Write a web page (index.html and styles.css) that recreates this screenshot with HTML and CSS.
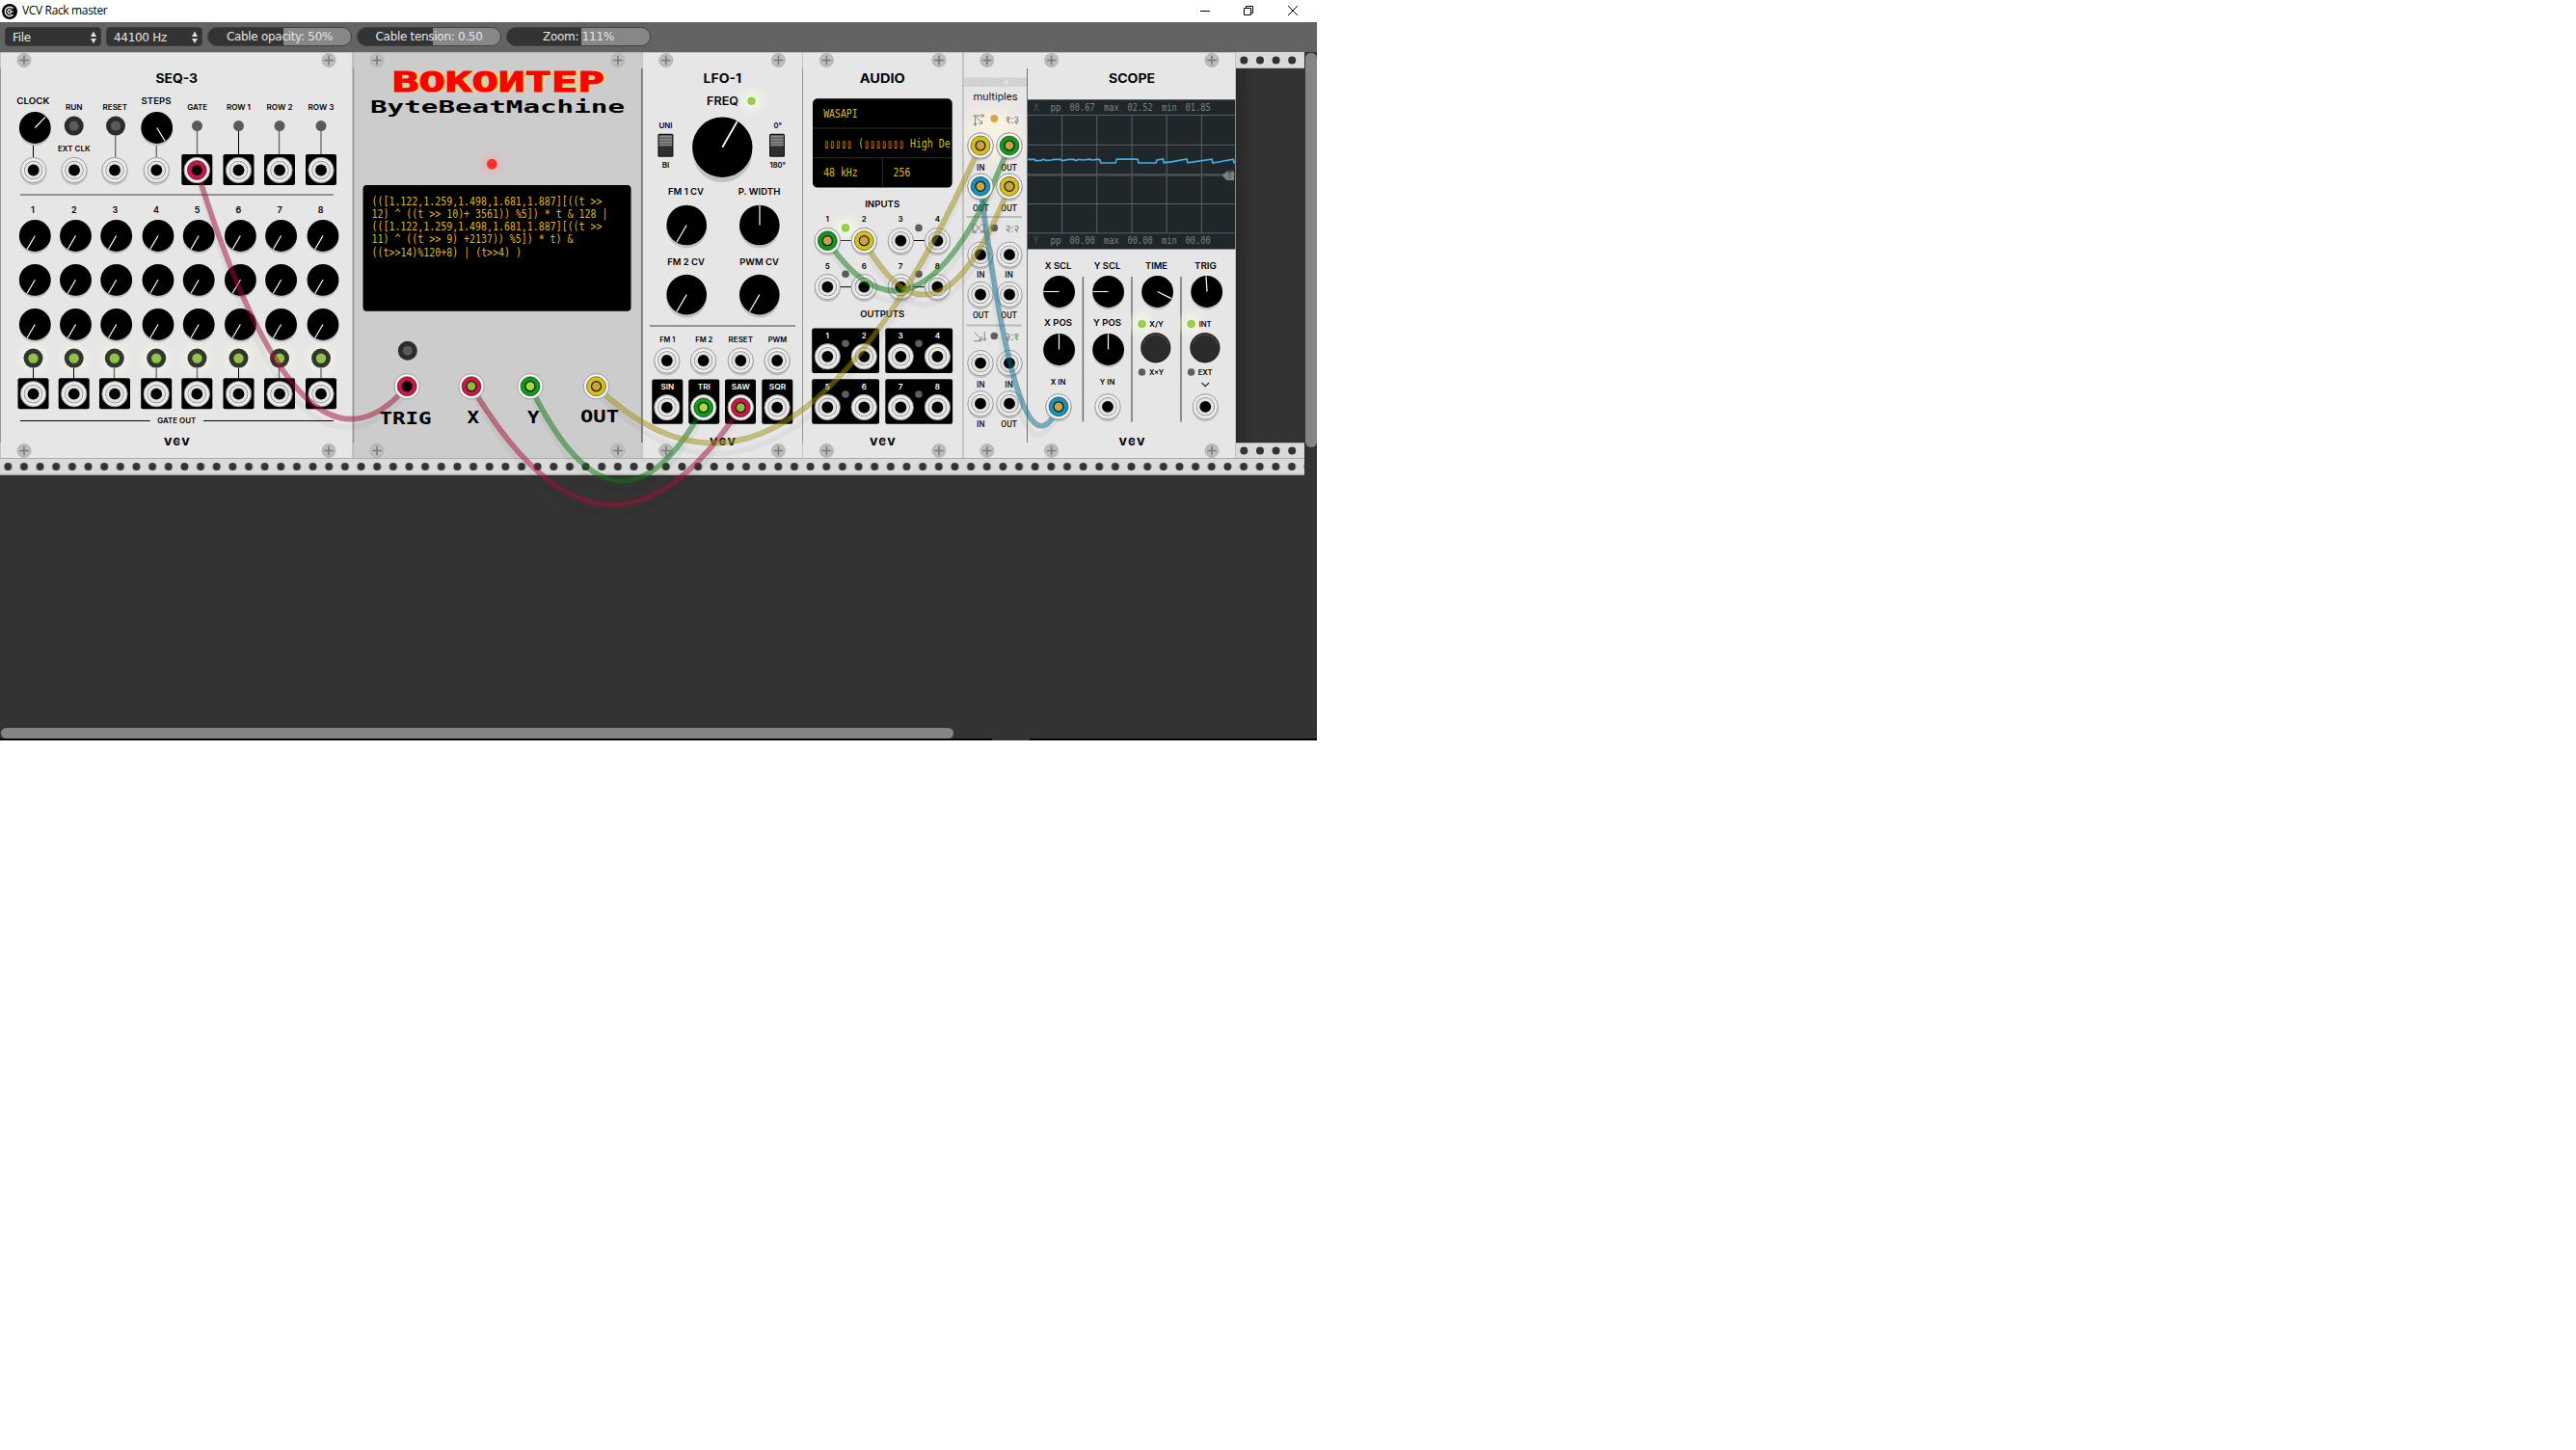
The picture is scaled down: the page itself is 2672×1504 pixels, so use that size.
FILE: index.html
```html
<!DOCTYPE html>
<html lang="en">
<head>
<meta charset="utf-8">
<title>VCV Rack master</title>
<link rel="stylesheet" href="styles.css">
</head>
<body>
<svg class="defs" aria-hidden="true">
  <defs>
    <radialGradient id="glowGreen"><stop offset="0" stop-color="#f4ffe0" stop-opacity=".95"/><stop offset="1" stop-color="#f0f8e4" stop-opacity="0"/></radialGradient>
    <radialGradient id="glowRed"><stop offset="0" stop-color="#ff8a80" stop-opacity=".4"/><stop offset="1" stop-color="#e8bcb8" stop-opacity="0"/></radialGradient>
    <radialGradient id="glowWarm"><stop offset="0.4" stop-color="#fff6e0" stop-opacity=".7"/><stop offset="1" stop-color="#f4eee0" stop-opacity="0"/></radialGradient>
    <pattern id="holes" patternUnits="userSpaceOnUse" x="0" y="0" width="16.646" height="18"><circle cx="8.3" cy="9.1" r="4" fill="#333"/></pattern>
    <pattern id="mesh" patternUnits="userSpaceOnUse" width="3" height="3"><rect width="3" height="3" fill="#dcdcdc"/><path d="M0 0L3 3M3 0L0 3" stroke="#c4c4c4" stroke-width=".7"/></pattern>
    <g id="screw"><circle r="7" fill="#bdbdbd" stroke="#a6a6a6" stroke-width=".7"/><path d="M-4.7 0H4.7M0 -4.7V4.7" stroke="#777" stroke-width="1.5"/></g>
    <g id="rings"><circle r="13.2" fill="#e8e8e8" stroke="#8c8c8c" stroke-width=".8"/><circle r="9.5" fill="#e3e3e3" stroke="#8a8a8a" stroke-width="1"/><circle r="10.4" fill="none" stroke="#fafafa" stroke-width=".8"/><circle r="5.9" fill="#000"/></g>
    <g id="jack"><circle cy="2" r="13.4" fill="#c2c2c2"/><use href="#rings"/></g>
    <g id="outjack"><rect x="-16" y="-16.5" width="32" height="32" rx="2"/><use href="#rings"/></g>
    <g id="knob"><circle cy="2.3" r="16.2" fill="#bfbfbf"/><circle r="16.4"/></g>
    <g id="knobmin"><use href="#knob"/><path d="M0 0L-8.2 14" class="tick"/></g>
    <g id="mid"><circle cy="3.2" r="20.7" fill="#c2c2c2"/><circle r="20.8"/></g>
    <g id="midmin"><use href="#mid"/><path d="M0 0L-10.3 17.7" class="tick"/></g>
    <g id="button"><circle r="10" fill="#2c2c2c"/><circle r="5" fill="#5a5a5a"/></g>
    <g id="stepbtn"><circle r="20" fill="url(#glowGreen)"/><circle r="10" fill="#33352f"/><circle r="5.2" fill="#90c445"/></g>
    <g id="dim"><circle r="3.8" fill="#5e5e5e"/></g>
    <g id="lit"><circle r="17" fill="url(#glowGreen)"/><circle r="3.8" fill="#98d53c" stroke="#7ea14c" stroke-width=".6"/></g>
    <g id="bigbtn"><circle cy=".6" r="15.6" fill="#222"/><circle r="14.9" fill="#2a2b2a"/><path d="M-12.8 -3A13.2 13.2 0 0 1 12.8 -3" fill="none" stroke="#555" stroke-width=".8"/></g>
    <g id="switch"><rect x="-8" y="-12" width="16" height="24" rx="1.5" fill="#111"/><rect x="-6.8" y="-10.8" width="13.6" height="11.5" fill="#626262"/><path d="M-6.8 -9H6.8M-6.8 -6H6.8M-6.8 -3H6.8M-6.8 0H6.8" stroke="#9a9a9a"/><rect x="-6.8" y="1" width="13.6" height="9.8" fill="#2e2e2e"/></g>
    <g id="vcv"><text class="logo" x="-9.2" y="4">V</text><text class="logo logo-c" x="0" y="4">C</text><path d="M-1 0H3" stroke="#000" stroke-width="1.2"/><text class="logo" x="9.2" y="4">V</text></g>
    <g id="plug"><circle r="13.2" fill="#f4f4f4" stroke="#8a8a86" stroke-width=".8"/><circle r="10" fill="currentColor"/><circle r="10" fill="none" stroke="#000" stroke-opacity=".45" stroke-width="1"/></g>
  </defs>
</svg>

<main class="window">
  <header class="titlebar">
    <svg class="app-icon" viewBox="0 0 16 16"><circle cx="8" cy="8" r="8"/><path d="M11.6 4.7A4.8 4.8 0 1 0 11.6 11.3" fill="none" stroke="#fff" stroke-width="1.4"/><path d="M9.6 6.3A2.2 2.2 0 1 0 9.6 9.7M8 8H11.5" fill="none" stroke="#fff" stroke-width="1.3"/></svg>
    <span class="app-name">VCV Rack master</span>
    <div class="window-buttons">
      <svg viewBox="0 0 12 12"><path d="M1 6.5H11"/></svg>
      <svg viewBox="0 0 12 12"><path d="M1.5 3.5H8.5V10.5H1.5ZM3.5 3.5V1.5H10.5V8.5H8.5"/></svg>
      <svg viewBox="0 0 12 12"><path d="M1 1L11 11M11 1L1 11"/></svg>
    </div>
  </header>

  <nav class="toolbar">
    <button class="choice"><span>File</span><svg viewBox="0 0 6 14"><path d="M3 0.5L6 6H0ZM3 13L0 8H6Z"/></svg></button>
    <button class="choice"><span>44100 Hz</span><svg viewBox="0 0 6 14"><path d="M3 0.5L6 6H0ZM3 13L0 8H6Z"/></svg></button>
    <div class="slider slider-opacity">Cable opacity: 50%</div>
    <div class="slider slider-tension">Cable tension: 0.50</div>
    <div class="slider slider-zoom">Zoom: 111%</div>
  </nav>

  <section class="rack">
    <div class="row">
      <!-- SEQ-3 -->
      <svg class="module seq" viewBox="0 54 366 421">
        <use href="#screw" x="25" y="62.5"/><use href="#screw" x="341" y="62.5"/><use href="#screw" x="25" y="467.5"/><use href="#screw" x="341" y="467.5"/>
        <path class="edge" d="M.5 71V459"/><path class="edge-soft" d="M.5 54V475M365.5 54V475M0 54.5H366"/>
        <text class="title" x="183.3" y="85.6" textLength="43.5" lengthAdjust="spacingAndGlyphs">SEQ-3</text>
        <text class="lbl" x="34.3" y="108" textLength="34" lengthAdjust="spacingAndGlyphs">CLOCK</text>
        <text class="lbl" x="162" y="108" textLength="31" lengthAdjust="spacingAndGlyphs">STEPS</text>
        <text class="sml" x="76.7" y="113.5" textLength="17.5" lengthAdjust="spacingAndGlyphs">RUN</text>
        <text class="sml" x="119.3" y="113.5" textLength="25.5" lengthAdjust="spacingAndGlyphs">RESET</text>
        <text class="sml" x="76.8" y="156.6" textLength="33.5" lengthAdjust="spacingAndGlyphs">EXT CLK</text>
        <text class="sml" x="204.7" y="113.5" textLength="21" lengthAdjust="spacingAndGlyphs">GATE</text>
        <text class="sml" x="247.5" y="113.5" textLength="25" lengthAdjust="spacingAndGlyphs">ROW 1</text>
        <text class="sml" x="290" y="113.5" textLength="27" lengthAdjust="spacingAndGlyphs">ROW 2</text>
        <text class="sml" x="333" y="113.5" textLength="27" lengthAdjust="spacingAndGlyphs">ROW 3</text>
        <path class="wire" d="M34.5 140V165M247.5 130V162"/>
        <path class="wire gray" d="M119.7 130V165M162.3 140V165M204.5 130V162M289.5 130V162M333 130V162"/>
        <use href="#knob" x="36.3" y="132.5"/><path class="tick" d="M36.3 132.5L47 121.3"/>
        <use href="#knob" x="162.7" y="132.5"/><path class="tick" d="M162.7 132.5L171 146"/>
        <use href="#button" x="76.7" y="130.6"/><use href="#button" x="120" y="130.6"/>
        <g fill="#5a5a5a"><circle cx="204.5" cy="130.6" r="5.5"/><circle cx="247.5" cy="130.6" r="5.5"/><circle cx="290" cy="130.6" r="5.5"/><circle cx="333" cy="130.6" r="5.5"/></g>
        <use href="#jack" x="34.7" y="176.5"/><use href="#jack" x="77" y="176.5"/><use href="#jack" x="119" y="176.5"/><use href="#jack" x="162.3" y="176.5"/>
        <use href="#outjack" x="204.3" y="176.5"/><use href="#outjack" x="247.5" y="176.5"/><use href="#outjack" x="290" y="176.5"/><use href="#outjack" x="333" y="176.5"/>
        <path class="rule" d="M21 202H346"/>
        <g class="num"><text x="34" y="220.6">1</text><text x="76.7" y="220.6">2</text><text x="119.3" y="220.6">3</text><text x="162" y="220.6">4</text><text x="204.7" y="220.6">5</text><text x="247.3" y="220.6">6</text><text x="290.2" y="220.6">7</text><text x="332.7" y="220.6">8</text></g>
        <g id="seqrow"><use href="#knobmin" x="36.3" y="244.5"/><use href="#knobmin" x="78.5" y="244.5"/><use href="#knobmin" x="120.7" y="244.5"/><use href="#knobmin" x="164" y="244.5"/><use href="#knobmin" x="206.2" y="244.5"/><use href="#knobmin" x="249.4" y="244.5"/><use href="#knobmin" x="291.6" y="244.5"/><use href="#knobmin" x="335" y="244.5"/></g>
        <use href="#seqrow" y="45.8"/><use href="#seqrow" y="92"/>
        <use href="#stepbtn" x="34.5" y="371.6"/><use href="#stepbtn" x="76.7" y="371.6"/><use href="#stepbtn" x="118.8" y="371.6"/><use href="#stepbtn" x="162.2" y="371.6"/><use href="#stepbtn" x="204.5" y="371.6"/><use href="#stepbtn" x="247.5" y="371.6"/><use href="#stepbtn" x="290" y="371.6"/><use href="#stepbtn" x="333" y="371.6"/>
        <path class="wire" d="M34.5 381.5V393M76.5 381.5V393M247.5 381.5V393"/>
        <path class="wire gray" d="M118.5 381.5V393M162.2 381.5V393M204.5 381.5V393M289.5 381.5V393M333 381.5V393"/>
        <use href="#outjack" x="34.5" y="408.7"/><use href="#outjack" x="76.7" y="408.7"/><use href="#outjack" x="119" y="408.7"/><use href="#outjack" x="162.2" y="408.7"/><use href="#outjack" x="204.3" y="408.7"/><use href="#outjack" x="247.5" y="408.7"/><use href="#outjack" x="290" y="408.7"/><use href="#outjack" x="333" y="408.7"/>
        <path class="wire" d="M21 436.5H155.7M211 436.5H346"/>
        <text class="sml" x="183.3" y="439.4" textLength="40" lengthAdjust="spacingAndGlyphs">GATE OUT</text>
        <use href="#vcv" x="183.3" y="458"/>
      </svg>

      <!-- ByteBeatMachine -->
      <svg class="module bbm" viewBox="366 54 300 421">
        <path class="edge" d="M366.7 71V459M665.5 71V459"/><path class="edge-soft" d="M366.7 54V475M366 54.5H666"/>
        <use href="#screw" x="391" y="62.5"/><use href="#screw" x="641" y="62.5"/><use href="#screw" x="391" y="467.5"/><use href="#screw" x="641" y="467.5"/>
        <text class="pix brand-shadow" x="408.5" y="95" textLength="220" lengthAdjust="spacingAndGlyphs">ВОКОИТЕР</text>
        <text class="pix brand" x="407" y="95" textLength="220" lengthAdjust="spacingAndGlyphs">ВОКОИТЕР</text>
        <text class="pix sub" x="384" y="117.3" textLength="264" lengthAdjust="spacingAndGlyphs">ByteBeatMachine</text>
        <circle cx="510.3" cy="170.2" r="19" fill="url(#glowRed)"/><circle cx="510.3" cy="170.2" r="5.4" fill="#ff302b"/>
        <rect x="376.5" y="192" width="278" height="130.7" rx="4"/>
        <g class="code">
          <text x="385.5" y="213.3" textLength="239" lengthAdjust="spacingAndGlyphs">(([1.122,1.259,1.498,1.681,1.887][((t &gt;&gt;</text>
          <text x="385.5" y="226.2" textLength="245" lengthAdjust="spacingAndGlyphs">12) ^ ((t &gt;&gt; 10)+ 3561)) %5]) * t &amp; 128 |</text>
          <text x="385.5" y="239.1" textLength="239" lengthAdjust="spacingAndGlyphs">(([1.122,1.259,1.498,1.681,1.887][((t &gt;&gt;</text>
          <text x="385.5" y="251.9" textLength="209" lengthAdjust="spacingAndGlyphs">11) ^ ((t &gt;&gt; 9) +2137)) %5]) * t) &amp;</text>
          <text x="385.5" y="265.5" textLength="155.5" lengthAdjust="spacingAndGlyphs">((t&gt;&gt;14)%120+8) | (t&gt;&gt;4) )</text>
        </g>
        <use href="#button" x="422.8" y="363.7"/>
        <text class="pix port" x="393.5" y="440" textLength="54" lengthAdjust="spacingAndGlyphs">TRIG</text>
        <text class="pix port" x="484.5" y="438.7" textLength="12.5" lengthAdjust="spacingAndGlyphs">X</text>
        <text class="pix port" x="547" y="438.7" textLength="12.5" lengthAdjust="spacingAndGlyphs">Y</text>
        <text class="pix port" x="602" y="438.2" textLength="40" lengthAdjust="spacingAndGlyphs">OUT</text>
      </svg>

      <!-- LFO-1 -->
      <svg class="module lfo" viewBox="666 54 166 421">
        <path class="edge" d="M666.5 71V459"/><path class="edge-soft" d="M666.5 54V475M666 54.5H832"/>
        <use href="#screw" x="690.8" y="62.5"/><use href="#screw" x="807.4" y="62.5"/><use href="#screw" x="690.8" y="467.5"/><use href="#screw" x="807.4" y="467.5"/>
        <text class="title" x="749.3" y="85.6" textLength="39.5" lengthAdjust="spacingAndGlyphs">LFO-1</text>
        <text class="lbl freq" x="749.6" y="108.6" textLength="33" lengthAdjust="spacingAndGlyphs">FREQ</text>
        <use href="#lit" x="779.5" y="104.7"/>
        <circle cx="749.3" cy="158" r="31" fill="#c2c2c2"/><circle cx="749.3" cy="152.7" r="31.2"/><path class="tick big" d="M749.3 152.7L764.5 126.3"/>
        <use href="#switch" x="690.4" y="150.8"/><use href="#switch" x="806" y="150.8"/>
        <text class="sml" x="690.5" y="132.7" textLength="14" lengthAdjust="spacingAndGlyphs">UNI</text><text class="sml" x="690.5" y="174.2" textLength="7.5" lengthAdjust="spacingAndGlyphs">BI</text>
        <text class="sml" x="806.7" y="132.7" textLength="8.5" lengthAdjust="spacingAndGlyphs">0°</text><text class="sml" x="806.7" y="174.2" textLength="16.5" lengthAdjust="spacingAndGlyphs">180°</text>
        <text class="lbl" x="711.5" y="202.3" textLength="37" lengthAdjust="spacingAndGlyphs">FM 1 CV</text><text class="lbl" x="787.5" y="202.3" textLength="43.5" lengthAdjust="spacingAndGlyphs">P. WIDTH</text>
        <use href="#midmin" x="712.2" y="233.5"/><use href="#mid" x="787.8" y="233.5"/><path class="tick" d="M788 233.5V213"/>
        <text class="lbl" x="711.5" y="274.5" textLength="38.5" lengthAdjust="spacingAndGlyphs">FM 2 CV</text><text class="lbl" x="787.5" y="274.5" textLength="40.5" lengthAdjust="spacingAndGlyphs">PWM CV</text>
        <use href="#midmin" x="712.2" y="305.6"/><use href="#midmin" x="787.8" y="305.6"/>
        <path class="rule" d="M674 338H825"/>
        <text class="sml" x="692.3" y="354.7" textLength="16" lengthAdjust="spacingAndGlyphs">FM 1</text><text class="sml" x="730.3" y="354.7" textLength="18" lengthAdjust="spacingAndGlyphs">FM 2</text><text class="sml" x="768.3" y="354.7" textLength="25.5" lengthAdjust="spacingAndGlyphs">RESET</text><text class="sml" x="806.5" y="354.7" textLength="19.5" lengthAdjust="spacingAndGlyphs">PWM</text>
        <use href="#jack" x="691.8" y="374"/><use href="#jack" x="729.6" y="374"/><use href="#jack" x="768.3" y="374"/><use href="#jack" x="806.1" y="374"/>
        <g><rect x="676.3" y="393.5" width="32" height="46.2" rx="2"/><rect x="714.2" y="393.5" width="32" height="46.2" rx="2"/><rect x="752" y="393.5" width="32" height="46.2" rx="2"/><rect x="790.3" y="393.5" width="32" height="46.2" rx="2"/></g>
        <g class="inv"><text class="sml" x="692.3" y="403.7" textLength="13.5" lengthAdjust="spacingAndGlyphs">SIN</text><text class="sml" x="730.3" y="403.7" textLength="13" lengthAdjust="spacingAndGlyphs">TRI</text><text class="sml" x="768.3" y="403.7" textLength="19" lengthAdjust="spacingAndGlyphs">SAW</text><text class="sml" x="806.5" y="403.7" textLength="17.5" lengthAdjust="spacingAndGlyphs">SQR</text></g>
        <use href="#rings" x="691.8" y="422.7"/><use href="#rings" x="729.6" y="422.7"/><use href="#rings" x="768.3" y="422.7"/><use href="#rings" x="806.1" y="422.7"/>
        <use href="#vcv" x="749.5" y="458"/>
      </svg>

      <!-- AUDIO -->
      <svg class="module audio" viewBox="832 54 167 421">
        <path class="edge" d="M832.5 71V459"/><path class="edge-soft" d="M832.5 54V475M998.5 54V475M832 54.5H999"/>
        <use href="#screw" x="857.4" y="62.5"/><use href="#screw" x="974" y="62.5"/><use href="#screw" x="857.4" y="467.5"/><use href="#screw" x="974" y="467.5"/>
        <text class="title" x="915.3" y="85.6" textLength="47" lengthAdjust="spacingAndGlyphs">AUDIO</text>
        <rect x="843" y="102.3" width="144.7" height="92.3" rx="5"/>
        <path d="M843 133H987.5M843 163.7H987.5M915.3 164V194.5" stroke="#303030"/>
        <g class="code"><text x="854.2" y="122" textLength="35.5" lengthAdjust="spacingAndGlyphs">WASAPI</text><text x="854.2" y="152.6" textLength="131.6" lengthAdjust="spacingAndGlyphs">▯▯▯▯▯ (▯▯▯▯▯▯▯ High De</text><text x="854.2" y="183.2" textLength="35.5" lengthAdjust="spacingAndGlyphs">48 kHz</text><text x="926.6" y="183.2" textLength="17.8" lengthAdjust="spacingAndGlyphs">256</text></g>
        <text class="lbl" x="915.2" y="214.6" textLength="36" lengthAdjust="spacingAndGlyphs">INPUTS</text>
        <g class="num small"><text x="858.3" y="229.5">1</text><text x="896.3" y="229.5">2</text><text x="934.1" y="229.5">3</text><text x="972.4" y="229.5">4</text><text x="858.3" y="278.7">5</text><text x="896.3" y="278.7">6</text><text x="934.1" y="278.7">7</text><text x="972.4" y="278.7">8</text></g>
        <path class="wire" d="M871 249.5H884M947 249.5H960M871 297.6H884M947 297.6H960"/>
        <use href="#lit" x="877" y="236.4"/><use href="#dim" x="953" y="236.4"/><use href="#dim" x="877" y="284.2"/><use href="#dim" x="953" y="284.2"/>
        <use href="#jack" x="858.3" y="249.7"/><use href="#jack" x="896.3" y="249.7"/><use href="#jack" x="934.3" y="249.7"/><use href="#jack" x="972.4" y="249.7"/>
        <use href="#jack" x="858.3" y="297.6"/><use href="#jack" x="896.3" y="297.6"/><use href="#jack" x="934.3" y="297.6"/><use href="#jack" x="972.4" y="297.6"/>
        <text class="lbl" x="915.2" y="329.4" textLength="46" lengthAdjust="spacingAndGlyphs">OUTPUTS</text>
        <g><rect x="842.2" y="340.4" width="69.8" height="46.5" rx="2"/><rect x="918.3" y="340.4" width="69.8" height="46.5" rx="2"/><rect x="842.2" y="393.2" width="69.8" height="46.5" rx="2"/><rect x="918.3" y="393.2" width="69.8" height="46.5" rx="2"/></g>
        <g class="num small inv"><text x="858.3" y="351">1</text><text x="896.3" y="351">2</text><text x="934.1" y="351">3</text><text x="972.4" y="351">4</text><text x="858.3" y="403.6">5</text><text x="896.3" y="403.6">6</text><text x="934.1" y="403.6">7</text><text x="972.4" y="403.6">8</text></g>
        <use href="#dim" x="877" y="356.2"/><use href="#dim" x="953" y="356.2"/><use href="#dim" x="877" y="409"/><use href="#dim" x="953" y="409"/>
        <use href="#rings" x="858.3" y="369.8"/><use href="#rings" x="896.3" y="369.8"/><use href="#rings" x="934.3" y="369.8"/><use href="#rings" x="972.4" y="369.8"/>
        <use href="#rings" x="858.3" y="422.5"/><use href="#rings" x="896.3" y="422.5"/><use href="#rings" x="934.3" y="422.5"/><use href="#rings" x="972.4" y="422.5"/>
        <use href="#vcv" x="915.3" y="457.5"/>
      </svg>

      <!-- multiples -->
      <svg class="module multi" viewBox="999 54 67 421">
        <path class="edge" d="M1065.5 71V459"/><path class="edge-soft" d="M999.5 54V475M999 54.5H1066"/>
        <use href="#screw" x="1023.8" y="62.5"/><use href="#screw" x="1023.8" y="467.5"/>
        <rect x="1000" y="80.5" width="65" height="9.5" fill="url(#mesh)"/><circle cx="1043.5" cy="85.2" r="2.3" fill="#e2e2e2"/>
        <text class="din name" x="1032.5" y="104" textLength="46" lengthAdjust="spacingAndGlyphs">multiples</text>
        <circle cx="1031.3" cy="140" r="42" fill="url(#glowWarm)"/>
        <circle cx="1031.3" cy="123" r="3.9" fill="#d5a545"/><use href="#dim" x="1031.3" y="236.4"/><use href="#dim" x="1031.3" y="348.5"/>
        <path class="route" d="M1009 120H1020.5M1018.3 118.4L1021 120L1018.3 121.6M1011.5 120V130M1010 127.8L1011.5 130.4L1013 127.8M1011.5 120L1018.5 128M1018.6 125V128.3H1015.3"/>
        <path class="route" d="M1009 232V242M1021 232V242M1011 232L1019 241M1019 232L1011 241M1016.5 241H1019.5V238.5M1010.5 238.5V241.3H1013.5"/>
        <path class="route" d="M1010.5 344.5L1018 352M1015 352.3H1018.2V349M1021.3 344V353M1019.8 351L1021.3 353.5L1022.8 351M1010 353.7H1018.5"/>
        <text class="ratio" x="1050" y="127.5">१:३</text><text class="ratio" x="1050" y="241">२:२</text><text class="ratio" x="1050" y="353">३:१</text>
        <path d="M1002.5 225H1060M1002.5 337.5H1060" stroke="#bababa" stroke-width="2"/>
        <use href="#jack" x="1017" y="151"/><use href="#jack" x="1047" y="151"/><use href="#jack" x="1017" y="193.3"/><use href="#jack" x="1047" y="193.3"/>
        <use href="#jack" x="1017" y="264.2"/><use href="#jack" x="1047" y="264.2"/><use href="#jack" x="1017" y="305.5"/><use href="#jack" x="1047" y="305.5"/>
        <use href="#jack" x="1017" y="376.6"/><use href="#jack" x="1047" y="376.6"/><use href="#jack" x="1017" y="418.7"/><use href="#jack" x="1047" y="418.7"/>
        <g class="din"><text x="1017.3" y="176.6">IN</text><text x="1046.6" y="176.6">OUT</text><text x="1017.3" y="218.5">OUT</text><text x="1046.6" y="218.5">OUT</text><text x="1017.3" y="288.2">IN</text><text x="1046.6" y="288.2">IN</text><text x="1017.3" y="330">OUT</text><text x="1046.6" y="330">OUT</text><text x="1017.3" y="401.6">IN</text><text x="1046.6" y="401.6">IN</text><text x="1017.3" y="443.2">IN</text><text x="1046.6" y="443.2">OUT</text></g>
      </svg>

      <!-- SCOPE -->
      <svg class="module scope" viewBox="1066 54 216 421">
        <path class="edge-soft" d="M1281.5 54V475M1066 54.5H1282"/>
        <use href="#screw" x="1090.6" y="62.5"/><use href="#screw" x="1257" y="62.5"/><use href="#screw" x="1090.6" y="467.5"/><use href="#screw" x="1257" y="467.5"/>
        <text class="title" x="1174" y="85.6" textLength="48" lengthAdjust="spacingAndGlyphs">SCOPE</text>
        <rect x="1066" y="103.3" width="215.3" height="155.2" fill="#20272a"/>
        <path d="M1066 119.4H1281.3M1066 150.3H1281.3M1066 211.5H1281.3M1066 241.8H1281.3M1101.6 119.4V241.8M1137.8 119.4V241.8M1174 119.4V241.8M1210.2 119.4V241.8M1246.4 119.4V241.8" stroke="#5d6365" stroke-width="1"/>
        <path d="M1066 181.3H1281.3" stroke="#4e5456" stroke-width="2.2"/>
        <g class="stat">
          <text class="faint" x="1072" y="114.8" textLength="5.5" lengthAdjust="spacingAndGlyphs">X</text><text x="1089.6" y="114.8" textLength="11" lengthAdjust="spacingAndGlyphs">pp</text><text x="1109.6" y="114.8" textLength="26" lengthAdjust="spacingAndGlyphs">00.67</text><text x="1145" y="114.8" textLength="15.6" lengthAdjust="spacingAndGlyphs">max</text><text x="1169.6" y="114.8" textLength="26" lengthAdjust="spacingAndGlyphs">02.52</text><text x="1205" y="114.8" textLength="15.6" lengthAdjust="spacingAndGlyphs">min</text><text x="1229.6" y="114.8" textLength="26" lengthAdjust="spacingAndGlyphs">01.85</text>
          <text class="faint" x="1072" y="252.8" textLength="5.5" lengthAdjust="spacingAndGlyphs">Y</text><text x="1089.6" y="252.8" textLength="11" lengthAdjust="spacingAndGlyphs">pp</text><text x="1109.6" y="252.8" textLength="26" lengthAdjust="spacingAndGlyphs">00.00</text><text x="1145" y="252.8" textLength="15.6" lengthAdjust="spacingAndGlyphs">max</text><text x="1169.6" y="252.8" textLength="26" lengthAdjust="spacingAndGlyphs">00.00</text><text x="1205" y="252.8" textLength="15.6" lengthAdjust="spacingAndGlyphs">min</text><text x="1229.6" y="252.8" textLength="26" lengthAdjust="spacingAndGlyphs">00.00</text>
        </g>
        <path d="M1066 165.3L1073 165.3L1074 166.6L1080 166.4L1082 165.2L1085 166.3L1091 166L1093 165.3L1100 165.4L1102 166.6L1109 165.3L1114 165.4L1116 166.5L1119 165.3L1124 166L1130 165.2L1133 166L1139 165.2L1141 166L1141.8 169L1157 169L1158.3 165.2L1180 165.2L1181 169L1199 169L1200 166L1206.5 165L1207 168.7L1215 167.8L1231 165L1231.8 168.9L1257 165.2L1258 169L1279.3 165.2L1280 168.7L1281.3 168.7" fill="none" stroke="#3fb0ea" stroke-width="1.7"/>
        <path d="M1267.8 182.3L1272.5 177.5H1280V187H1272.5Z" fill="#7b8082"/><text class="trig-mark" x="1275.5" y="185.2">T</text>
        <text class="lbl" x="1097.6" y="278.5" textLength="27.5" lengthAdjust="spacingAndGlyphs">X SCL</text><text class="lbl" x="1148.5" y="278.5" textLength="27.5" lengthAdjust="spacingAndGlyphs">Y SCL</text><text class="lbl" x="1199.5" y="278.5" textLength="23" lengthAdjust="spacingAndGlyphs">TIME</text><text class="lbl" x="1250.4" y="278.5" textLength="23" lengthAdjust="spacingAndGlyphs">TRIG</text>
        <path d="M1123.4 287V437.6M1174 287V437.6M1225 287V437.6" stroke="#6a6a6a" stroke-width="1.4"/>
        <use href="#knob" x="1098.6" y="302.5"/><use href="#knob" x="1149.6" y="302.5"/><use href="#knob" x="1200.6" y="302.5"/><use href="#knob" x="1251.7" y="302.5"/>
        <path class="tick" d="M1098.6 302.5H1082.4M1149.6 302.5H1133.4M1200.6 302.5L1215 309.6M1252 302.5L1251 286.5"/>
        <text class="lbl" x="1097.6" y="338.3" textLength="29" lengthAdjust="spacingAndGlyphs">X POS</text><text class="lbl" x="1148.5" y="338.3" textLength="29" lengthAdjust="spacingAndGlyphs">Y POS</text>
        <use href="#knob" x="1098.6" y="362.5"/><use href="#knob" x="1149.6" y="362.5"/><path class="tick" d="M1098.5 362.5V346.5M1149.5 362.5V346.5"/>
        <use href="#lit" x="1184.5" y="336"/><use href="#lit" x="1235.6" y="336"/><use href="#dim" x="1184.5" y="386"/><use href="#dim" x="1235.6" y="386"/>
        <use href="#bigbtn" x="1198.8" y="360.2"/><use href="#bigbtn" x="1249.9" y="360.2"/>
        <text class="sml" x="1199.5" y="338.7" textLength="15" lengthAdjust="spacingAndGlyphs">X/Y</text><text class="sml" x="1250.2" y="338.7" textLength="13" lengthAdjust="spacingAndGlyphs">INT</text><text class="sml" x="1199.5" y="388.8" textLength="15" lengthAdjust="spacingAndGlyphs">X×Y</text><text class="sml" x="1250.2" y="388.8" textLength="15" lengthAdjust="spacingAndGlyphs">EXT</text>
        <path d="M1246.6 397L1250.3 400.7L1254 397" fill="none" stroke="#222" stroke-width="1.1"/>
        <text class="sml" x="1097.6" y="399.4" textLength="15.5" lengthAdjust="spacingAndGlyphs">X IN</text><text class="sml" x="1148.6" y="399.4" textLength="15.5" lengthAdjust="spacingAndGlyphs">Y IN</text>
        <use href="#jack" x="1098" y="421.8"/><use href="#jack" x="1149" y="421.8"/><use href="#jack" x="1250.3" y="421.8"/>
        <use href="#vcv" x="1174" y="457.8"/>
      </svg>

      <!-- empty slot at the end of the row -->
      <svg class="slot" viewBox="1282 54 71 421">
        <rect x="1282" y="54" width="71" height="17" fill="#dadada"/>
        <path d="M1282 70.5H1353" stroke="#b5b5b5"/>
        <rect x="1282" y="459.3" width="71" height="16" fill="#dadada"/>
        <g fill="#333"><circle cx="1290.3" cy="62.4" r="4"/><circle cx="1307" cy="62.4" r="4"/><circle cx="1323.6" cy="62.4" r="4"/><circle cx="1340.2" cy="62.4" r="4"/><circle cx="1290.3" cy="467.5" r="4"/><circle cx="1307" cy="467.5" r="4"/><circle cx="1323.6" cy="467.5" r="4"/><circle cx="1340.2" cy="467.5" r="4"/></g>
      </svg>
      <div class="vtrack"><div class="vscroll"></div></div>
    </div>
    <svg class="rail-strip" viewBox="0 0 1353 18"><rect width="1353" height="18" fill="#dadada"/><rect width="1353" height="18" fill="url(#holes)"/><path d="M0 .5H1353" stroke="#aaa"/><path d="M0 17.3H1353" stroke="#b2b2b2" stroke-width="1.4"/></svg>

    <svg class="cables" viewBox="0 54 1366 700">
      <g class="shade"><path d="M204.3 182Q306 541 422.2 407"/><path d="M489 407Q628.6 649 768.3 429"/><path d="M550 407Q640 600 729.7 429"/><path d="M618.5 407Q818 612 1017 157"/><path d="M1047 157Q953 406 858.3 256"/><path d="M1047 199Q972 400 896.3 256"/><path d="M1017 199Q1052 526 1098 428"/></g>
      <g class="cable pink"><path class="o" d="M204.3 176.5Q313.2 528.3 422.2 400.7"/><path d="M204.3 176.5Q313.2 528.3 422.2 400.7"/></g>
      <g class="cable pink"><path class="o" d="M489 400.7Q628.6 635 768.3 422.7"/><path d="M489 400.7Q628.6 635 768.3 422.7"/></g>
      <g class="cable green"><path class="o" d="M550 400.7Q639.8 585.5 729.7 422.7"/><path d="M550 400.7Q639.8 585.5 729.7 422.7"/></g>
      <g class="cable yellow"><path class="o" d="M618.5 400.7Q817.7 594.2 1017 151"/><path d="M618.5 400.7Q817.7 594.2 1017 151"/></g>
      <g class="cable green"><path class="o" d="M1047 151Q952.6 390 858.3 249.7"/><path d="M1047 151Q952.6 390 858.3 249.7"/></g>
      <g class="cable yellow"><path class="o" d="M1047 193.3Q971.6 385.2 896.3 249.7"/><path d="M1047 193.3Q971.6 385.2 896.3 249.7"/></g>
      <g class="cable blue"><path class="o" d="M1017 193.3Q1057.5 512 1098 421.8"/><path d="M1017 193.3Q1057.5 512 1098 421.8"/></g>
      <g class="pink"><use href="#plug" x="204.3" y="176.5"/><use href="#plug" x="422.2" y="400.7"/><use href="#plug" x="489" y="400.7"/><use href="#plug" x="768.3" y="422.7"/></g>
      <g class="green"><use href="#plug" x="550" y="400.7"/><use href="#plug" x="729.7" y="422.7"/><use href="#plug" x="1047" y="151"/><use href="#plug" x="858.3" y="249.7"/></g>
      <g class="yellow"><use href="#plug" x="618.5" y="400.7"/><use href="#plug" x="1017" y="151"/><use href="#plug" x="1047" y="193.3"/><use href="#plug" x="896.3" y="249.7"/></g>
      <g class="blue"><use href="#plug" x="1017" y="193.3"/><use href="#plug" x="1098" y="421.8"/></g>
      <g class="tips"><circle class="k" cx="204.3" cy="176.5" r="5"/><circle class="k" cx="422.2" cy="400.7" r="5"/><circle class="g" cx="489" cy="400.7" r="5"/><circle class="g" cx="768.3" cy="422.7" r="5"/><circle class="b" cx="550" cy="400.7" r="5"/><circle class="b" cx="729.7" cy="422.7" r="5"/><circle cx="618.5" cy="400.7" r="5"/><circle cx="1017" cy="151" r="5"/><circle cx="1047" cy="151" r="5"/><circle cx="1017" cy="193.3" r="5"/><circle cx="1047" cy="193.3" r="5"/><circle cx="858.3" cy="249.7" r="5"/><circle cx="896.3" cy="249.7" r="5"/><circle cx="1098" cy="421.8" r="5"/></g>
    </svg>
  </section>
  <footer class="hscroll-track"><div class="hscroll"></div></footer>
  <div class="bottom-edge"><span class="edge-tab"></span></div>
</main>
</body>
</html>
```
FILE: styles.css
```css
body { margin: 0; background: #fff; }
.defs { position: absolute; width: 0; height: 0; }
.window { width: 1366px; height: 768px; display: flex; flex-direction: column; background: #333; overflow: hidden; }

.titlebar { height: 23px; display: flex; align-items: center; background: #fff; font: 12px/1 "Open Sans", "Noto Sans", sans-serif; color: #000; }
.app-icon { width: 16px; height: 16px; margin: 0 5px 0 2px; }
.app-name { letter-spacing: -0.35px; padding-bottom: 1px; }
.window-buttons { margin-left: auto; display: flex; gap: 33px; padding: 0 19px 2px 0; }
.window-buttons svg { width: 12px; height: 12px; fill: none; stroke: #000; stroke-width: 1; }
.window-buttons svg:nth-child(2) { margin-right: 1px; }

.toolbar { height: 31px; display: flex; gap: 5px; padding: 5px; box-sizing: border-box; background: #636363; font: 12px/20px "DejaVu Sans", sans-serif; letter-spacing: -0.3px; color: #e6e6e6; }
.choice { width: 100px; height: 20px; box-sizing: border-box; display: flex; justify-content: space-between; align-items: center; padding: 1px 4px 0 7px; border: 1px solid #3d3d3d; border-radius: 4px; background: #333; font: inherit; letter-spacing: inherit; color: inherit; }
.choice svg { width: 6px; height: 14px; fill: #ddd; }
.slider { width: 150px; height: 20px; box-sizing: border-box; line-height: 19px; border: 1px solid #404040; border-radius: 10px; text-align: center; }
.slider-opacity { background: linear-gradient(90deg, #333 78px, #878787 78px); }
.slider-tension { background: linear-gradient(90deg, #333 78px, #878787 78px); }
.slider-zoom { background: linear-gradient(90deg, #333 77px, #878787 77px); }

.rack { flex: 1; position: relative; }
.row { display: flex; height: 421px; }
.module { height: 421px; background: #e6e6e6; flex: none; }
.seq { width: 366px; }
.bbm { width: 300px; background: #ccc; }
.lfo { width: 166px; }
.audio { width: 167px; }
.multi { width: 67px; }
.scope { width: 216px; }
.slot { width: 71px; height: 421px; background: linear-gradient(90deg, #292929, #333 20px); }
.vtrack { width: 13px; }
.vscroll { width: 12px; height: 410px; margin-left: 1px; box-sizing: border-box; border-top: 1px solid #333; border-radius: 6px; background: #858585; }
.rail-strip { display: block; width: 1353px; height: 18px; }
.cables { position: absolute; left: 0; top: 0; width: 1366px; height: 700px; }

.hscroll-track { height: 11px; }
.hscroll { width: 988px; height: 11px; margin-left: 1px; border-radius: 6px; background: #858585; }
.bottom-edge { height: 2px; background: #000; display: flex; }
.edge-tab { width: 39px; margin-left: 1029px; background: #333; }

.edge { stroke: #747474; stroke-width: 1; fill: none; }
.edge-soft { stroke: #aaa; stroke-opacity: .6; stroke-width: 1; fill: none; }
.rule { stroke: #747674; stroke-width: 1.7; }
.wire { stroke: #000; stroke-width: 1; }
.wire.gray { stroke: #666; stroke-width: 1.3; }
.tick { stroke: #fff; stroke-width: 1.2; fill: none; }
.tick.big { stroke-width: 1.8; }
.title, .lbl, .sml, .num { font-family: Inter, sans-serif; text-anchor: middle; fill: #000; }
.title { font-size: 12.8px; font-weight: 700; }
.lbl { font-size: 9px; font-weight: 600; }
.freq { font-size: 11.5px; }
.sml { font-size: 7.5px; font-weight: 600; }
.num { font-size: 9px; font-weight: 600; }
.num.small { font-size: 8px; }
.inv, .inv text { fill: #fff; }
.logo { font: 800 11px Inter, sans-serif; text-anchor: middle; }
.logo-c { font-size: 10px; }
.pix { font-family: "DejaVu Sans Mono", monospace; font-weight: 700; }
.brand { font-size: 28px; fill: #f00; stroke: #f00; stroke-width: 1; }
.brand-shadow { font-size: 28px; fill: #ffe02a; stroke: #ffd92a; stroke-width: 1.6; }
.sub { font-size: 18.5px; }
.port { font-size: 17px; }
.code text { font: 11.5px "DejaVu Sans Mono", monospace; fill: #dfb81d; }
.stat text { font: 10.5px "DejaVu Sans Mono", monospace; fill: #7d8385; }
.stat .faint { fill: #4e5557; }
.trig-mark { font: 8px "DejaVu Sans", sans-serif; text-anchor: middle; fill: #3a4042; }
.din { font: 500 8.5px Roboto, sans-serif; text-anchor: middle; fill: #111; }
.din.name { font-size: 11px; font-weight: 400; }
.ratio { font: 11px "Noto Sans", "DejaVu Sans", sans-serif; text-anchor: middle; fill: #777; }
.route { stroke: #7c7c7c; stroke-width: .9; fill: none; }

.pink { color: #c91847; }
.green { color: #149718; }
.yellow { color: #d4bf14; }
.blue { color: #1791b8; }
.cable { opacity: .5; fill: none; stroke: currentColor; stroke-width: 4.2; }
.cable.pink { color: #a91038; }
.cable.green { color: #0c7c12; }
.cable.yellow { color: #a59312; }
.cable.blue { color: #0e6e90; }
.cable .o { stroke-width: 5.6; filter: brightness(.8); }
.shade { fill: none; stroke: #000; stroke-opacity: .035; stroke-width: 6; }
.tips circle { fill: #caa342; stroke: #111; stroke-width: 1.2; }
.tips .k { fill: #000; }
.tips .g { fill: #8cbd38; }
.tips .b { fill: #a3dc3e; }
```
